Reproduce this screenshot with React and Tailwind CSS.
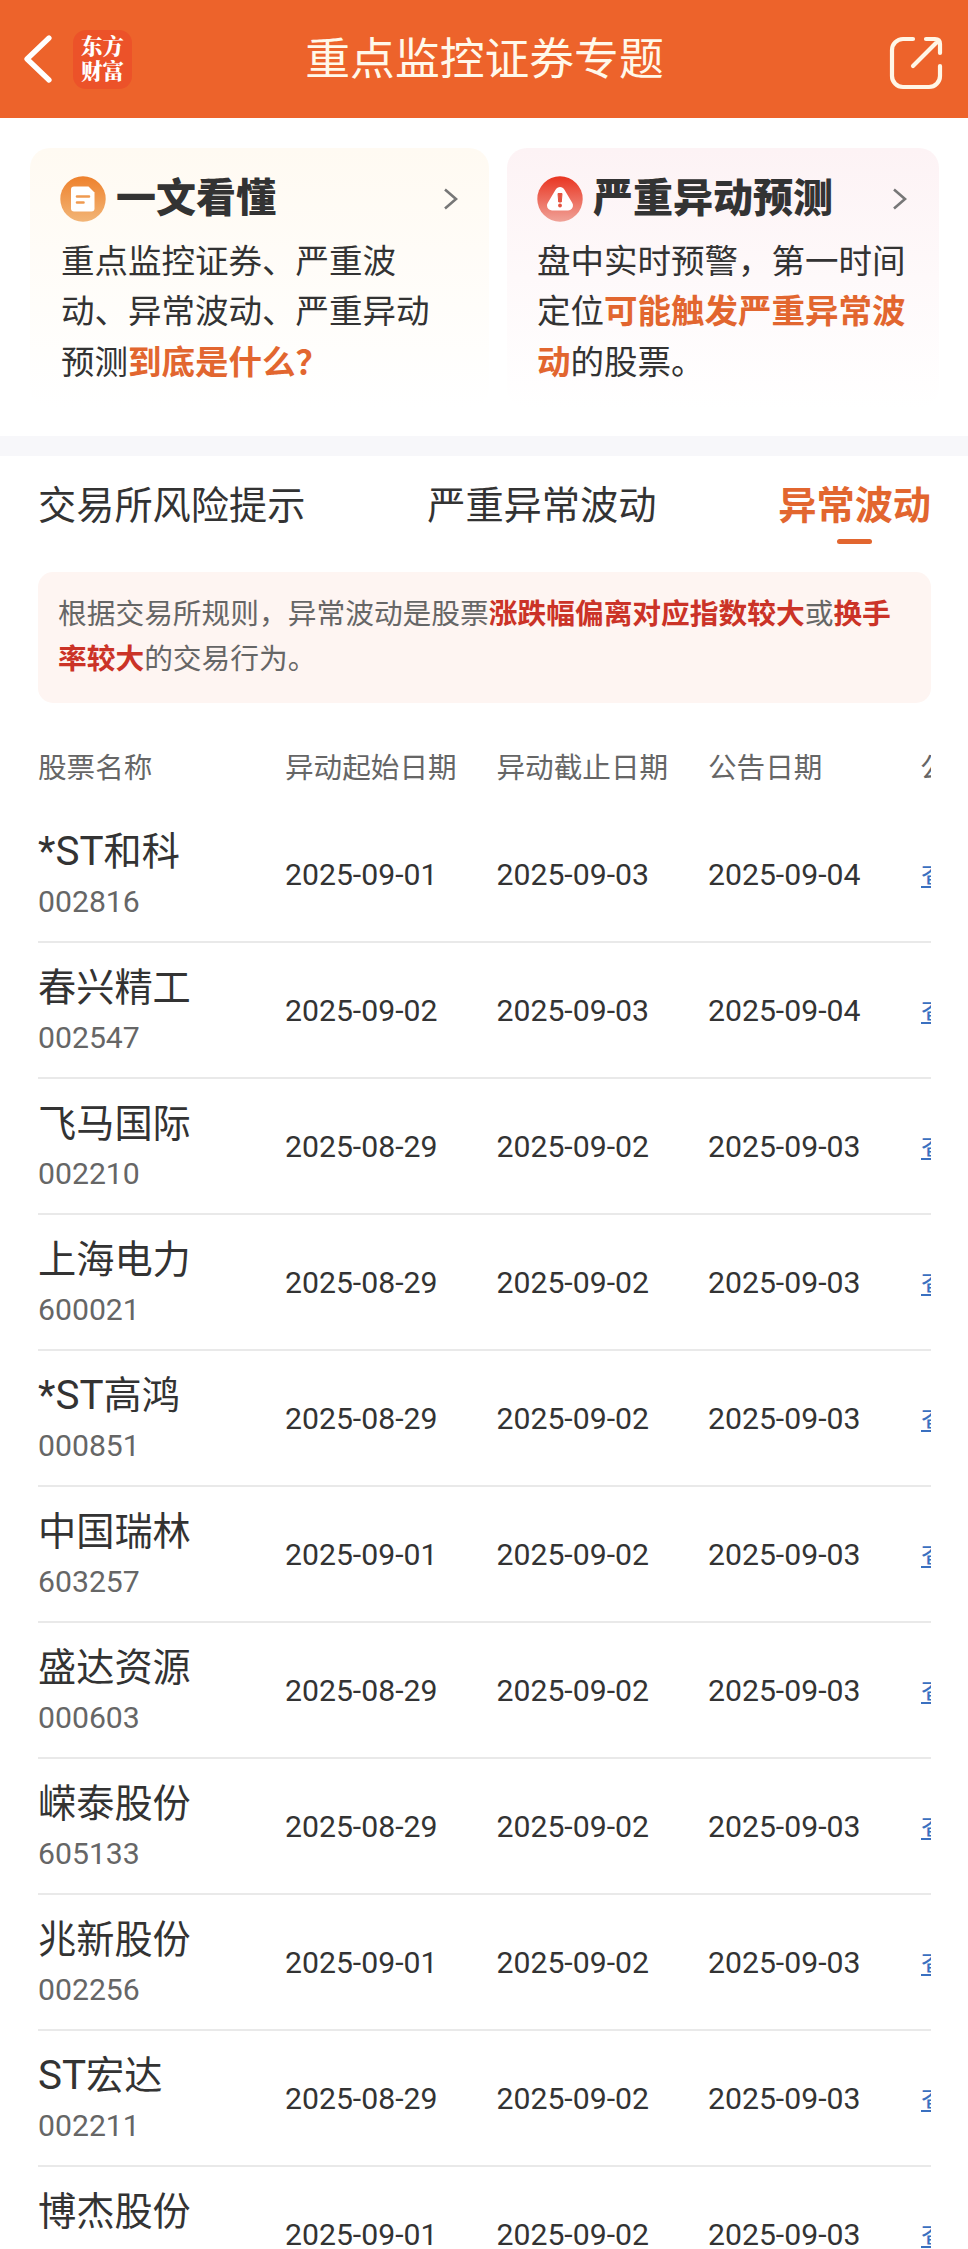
const rows = [
  { prefix: "*ST", name: "和科", code: "002816", start: "2025-09-01", end: "2025-09-03", notice: "2025-09-04" },
  { name: "春兴精工", code: "002547", start: "2025-09-02", end: "2025-09-03", notice: "2025-09-04" },
  { name: "飞马国际", code: "002210", start: "2025-08-29", end: "2025-09-02", notice: "2025-09-03" },
  { name: "上海电力", code: "600021", start: "2025-08-29", end: "2025-09-02", notice: "2025-09-03" },
  { prefix: "*ST", name: "高鸿", code: "000851", start: "2025-08-29", end: "2025-09-02", notice: "2025-09-03" },
  { name: "中国瑞林", code: "603257", start: "2025-09-01", end: "2025-09-02", notice: "2025-09-03" },
  { name: "盛达资源", code: "000603", start: "2025-08-29", end: "2025-09-02", notice: "2025-09-03" },
  { name: "嵘泰股份", code: "605133", start: "2025-08-29", end: "2025-09-02", notice: "2025-09-03" },
  { name: "兆新股份", code: "002256", start: "2025-09-01", end: "2025-09-02", notice: "2025-09-03" },
  { prefix: "ST", name: "宏达", code: "002211", start: "2025-08-29", end: "2025-09-02", notice: "2025-09-03" },
  { name: "博杰股份", code: "002580", start: "2025-09-01", end: "2025-09-02", notice: "2025-09-03" },
];

const gridCols = "grid grid-cols-[247px_211.5px_211.5px_212px_120px]";

function Chevron() {
  return (
    <svg className="h-[22px] w-[14px]" viewBox="0 0 14 22" fill="none" stroke="#777" strokeWidth="2.6">
      <path d="M1 1.5 12 11 1 20.5" />
    </svg>
  );
}

function DocIcon() {
  return (
    <svg className="size-[46px]" viewBox="0 0 46 46">
      <defs>
        <linearGradient id="doc" x1="0" y1="0" x2="0" y2="1">
          <stop offset="0" stopColor="#ee812c" />
          <stop offset="1" stopColor="#f2b577" />
        </linearGradient>
      </defs>
      <circle cx="23" cy="23" r="22.7" fill="url(#doc)" />
      <path d="M14 10.5h14.5l6 6v16a3 3 0 0 1-3 3H14a3 3 0 0 1-3-3v-19a3 3 0 0 1 3-3z" fill="#fff" />
      <path d="M17 20.5h12M17 26.5h6.5" stroke="#ef9a50" strokeWidth="2.6" strokeLinecap="round" />
    </svg>
  );
}

function AlertIcon() {
  return (
    <svg className="size-[46px]" viewBox="0 0 46 46">
      <defs>
        <linearGradient id="alert" x1="0" y1="0" x2="0" y2="1">
          <stop offset="0" stopColor="#e93420" />
          <stop offset="1" stopColor="#f0a298" />
        </linearGradient>
      </defs>
      <circle cx="23" cy="23" r="22.7" fill="url(#alert)" />
      <path d="M23 16 31 29.5H15z" fill="#fff" stroke="#fff" strokeWidth="10" strokeLinejoin="round" />
      <path d="M21 17.5h4l-.7 8.5h-2.6z" fill="#e4523f" stroke="#e4523f" strokeWidth="1" strokeLinejoin="round" />
      <circle cx="23" cy="29.5" r="1.9" fill="#e4523f" />
    </svg>
  );
}

function Header() {
  return (
    <header className="flex h-[118px] items-center justify-between bg-[#ed632b] pl-6 pr-[25px]">
      <div className="flex w-[130px] items-center gap-[21px]">
        <svg className="h-[48px] w-[28px]" viewBox="0 0 28 48" fill="none" stroke="#fff" strokeWidth="5.2" strokeLinecap="round" strokeLinejoin="round">
          <path d="M25 3 3 24l22 21" />
        </svg>
        <div className="flex size-[59px] flex-col items-center justify-center rounded-[13px] bg-[#ec5229] pb-[4px] font-['Noto_Serif_CJK_SC','Noto_Sans_CJK_SC',serif] text-[21.5px] font-black leading-[25px] text-white">
          <span>东方</span>
          <span>财富</span>
        </div>
      </div>
      <h1 className="pl-[2px] pt-[3px] text-[44.8px] leading-none text-[#fff8ea]">重点监控证券专题</h1>
      <div className="flex w-[130px] justify-end pt-[7px]">
        <svg className="size-[54px]" viewBox="0 0 54 54" fill="none" stroke="#fff6e6" strokeWidth="4.2" strokeLinecap="round" strokeLinejoin="round">
          <path d="M24 3H14A11 11 0 0 0 3 14v26a11 11 0 0 0 11 11h26a11 11 0 0 0 11-11V30" />
          <path d="M37 3h9q5 0 5 5v9M48.5 5.5 24 30" />
        </svg>
      </div>
    </header>
  );
}

function CardTitle({ icon, children }) {
  return (
    <div className="flex h-[46px] items-center">
      {icon}
      <h2 className="ml-[10px] text-[40px] font-black leading-none text-[#333]">{children}</h2>
      <div className="ml-auto pr-px">
        <Chevron />
      </div>
    </div>
  );
}

export default function App() {
  return (
    <div className="h-[2249px] w-[968px] overflow-hidden bg-white font-['Roboto','Noto_Sans_CJK_SC',sans-serif] text-[#333]">
      <Header />

      {/* Intro cards */}
      <section className="flex h-[318px] gap-[18px] pl-[30px] pr-[29px] pt-[30px]">
        <div className="h-[260px] w-[459px] rounded-[20px] bg-linear-to-b from-[#fffaf2] to-white px-[30px] pt-[28px]">
          <CardTitle icon={<DocIcon />}>一文看懂</CardTitle>
          <p className="mt-[15px] w-[380px] pl-px text-[33.5px] leading-[50.4px]">
            重点监控证券、严重波动、异常波动、严重异动预测<b className="text-[#e2662f]">到底是什么？</b>
          </p>
        </div>
        <div className="h-[260px] w-[432px] rounded-[20px] bg-linear-to-b from-[#fdf3f5] to-white pl-[30px] pr-[31px] pt-[28px]">
          <CardTitle icon={<AlertIcon />}>严重异动预测</CardTitle>
          <p className="mt-[15px] w-[371px] text-[33.5px] leading-[50.4px]">
            盘中实时预警，第一时间定位<b className="text-[#e2662f]">可能触发严重异常波动</b>的股票。
          </p>
        </div>
      </section>
      <div className="h-5 bg-[#f7f7fa]" />

      {/* Tabs */}
      <nav className="flex h-[116px] justify-between pl-[38px] pr-[37px] pt-[25px] text-[38.2px] leading-[50px]">
        <span>交易所风险提示</span>
        <span>严重异常波动</span>
        <span className="flex flex-col items-center font-bold text-[#e2662f]">
          异常波动
          <i className="mt-[8px] h-[5px] w-[35px] rounded-full bg-[#e2662f]" />
        </span>
      </nav>

      <p className="ml-[38px] mr-[37px] h-[131px] rounded-[15px] bg-[#fef5f2] pl-5 pr-[30px] pt-[20px] text-[28.73px] leading-[45px] text-[#666]">
        根据交易所规则，异常波动是股票<b className="text-[#cb3327]">涨跌幅偏离对应指数较大</b>或<b className="text-[#cb3327]">换手率较大</b>的交易行为。
      </p>

      {/* Table, scrolls sideways */}
      <div className="ml-[38px] mr-[37px] mt-[43px] overflow-hidden">
        <div className="w-[1003px]">
          <div className={`${gridCols} h-[61px] text-[28.6px] leading-[44px] text-[#666]`}>
            <span>股票名称</span>
            <span>异动起始日期</span>
            <span>异动截止日期</span>
            <span>公告日期</span>
            <span>公告</span>
          </div>
          {rows.map((r) => (
            <div key={r.code} className={`${gridCols} h-[136.05px] items-center border-b-2 border-[#e9e9e9] pt-px text-[30.2px]`}>
              <div>
                <div className="text-[38.2px] leading-[54px]">
                  {r.prefix && <span className="text-[40.4px] leading-none">{r.prefix}</span>}
                  {r.name}
                </div>
                <div className="leading-[46px] text-[#666]">{r.code}</div>
              </div>
              <span>{r.start}</span>
              <span>{r.end}</span>
              <span>{r.notice}</span>
              <a className="pl-px pt-[5px] text-[28.6px] leading-[42px] text-[#3a70c0] underline decoration-2 underline-offset-[-1px] [text-decoration-skip-ink:none]">查看</a>
            </div>
          ))}
        </div>
      </div>
    </div>
  );
}
